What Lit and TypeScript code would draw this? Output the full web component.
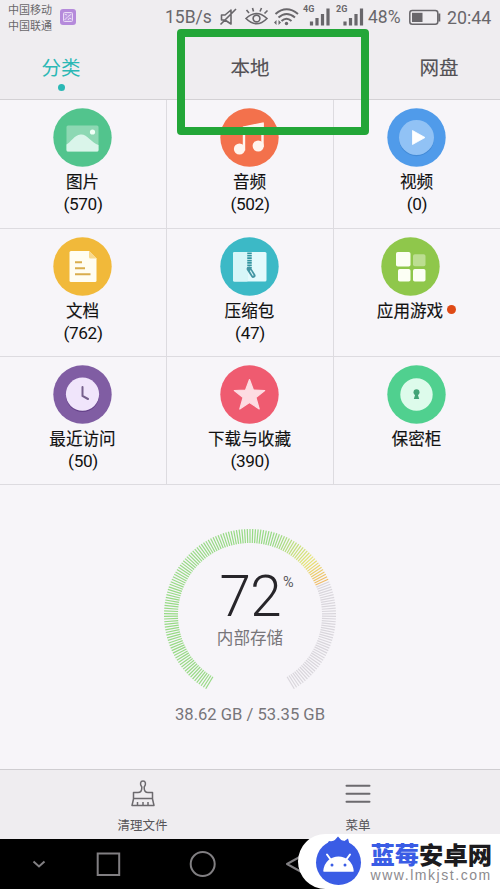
import { LitElement, html, svg, css } from "lit";
import { customElement, property } from "lit/decorators.js";

type Cell = { icon: string; label: string; count?: string; dot?: boolean };

const CELLS: Cell[] = [
  { icon: "image", label: "图片", count: "(570)" },
  { icon: "music", label: "音频", count: "(502)" },
  { icon: "video", label: "视频", count: "(0)" },
  { icon: "doc", label: "文档", count: "(762)" },
  { icon: "zip", label: "压缩包", count: "(47)" },
  { icon: "apps", label: "应用游戏", dot: true },
  { icon: "recent", label: "最近访问", count: "(50)" },
  { icon: "star", label: "下载与收藏", count: "(390)" },
  { icon: "safe", label: "保密柜" },
];

const COLORS: Record<string, string> = {
  image: "#52c48d", music: "#f3714c", video: "#509bea",
  doc: "#f1b93a", zip: "#3cb9c6", apps: "#8fc74b",
  recent: "#805da3", star: "#ef5b70", safe: "#50d08f",
};

const GLYPHS: Record<string, unknown> = {
  image: svg`<rect x="13" y="17" width="32" height="26" rx="1.500" fill="#8dd8b3"/>
    <path d="M13 36C17 34 21 26.500 27 26C33 25 38 34 45 36.500V41.500Q45 43 43.500 43H14.500Q13 43 13 41.500Z" fill="#daf5ea"/>
    <circle cx="39" cy="23.500" r="2.600" fill="#effff6"/>`,
  music: svg`<path d="M23.500 42V19.500L42 16V38.500" fill="none" stroke="#fff4ee" stroke-width="2.400"/>
    <path d="M22.300 18L43.200 13.800V19L22.300 22.500Z" fill="#fff4ee"/>
    <circle cx="19" cy="40.500" r="5.600" fill="#fff4ee"/><circle cx="37.700" cy="37.500" r="5.600" fill="#fff4ee"/>`,
  video: svg`<circle cx="29" cy="30.200" r="17.500" fill="#438bd7"/><circle cx="29" cy="29" r="17.500" fill="#91c2f5"/>
    <path d="M25 22L37.500 29L25 36Z" fill="#fff" stroke="#fff" stroke-width=".8" stroke-linejoin="round"/>`,
  doc: svg`<path d="M17.500 13.500H35.500L43 21V43Q43 44.500 41.500 44.500H17.500Q16 44.500 16 43V15Q16 13.500 17.500 13.500Z" fill="#fffdf2"/>
    <path d="M35.500 13.500V19.500Q35.500 21 37 21H43Z" fill="#f9d98b"/>
    <path d="M21.500 24.700h7M21.500 30.700h10M21.500 36.700h15.500" stroke="#d9ad4d" stroke-width="2"/>`,
  zip: svg`<rect x="12.500" y="14.500" width="33.500" height="29.500" rx="1.500" fill="#e3fafc"/>
    <rect x="12.500" y="14.500" width="15" height="29.500" rx="1.500" fill="#d7f6f8"/>
    <path d="M29 15V32" stroke="#31949f" stroke-width="4.500" stroke-dasharray="1.700 .7"/>
    <path d="M28.500 31.500L32.700 38" stroke="#4296a3" stroke-width="4.600" stroke-linecap="round"/>
    <path d="M30 33.500L32.500 37.700" stroke="#d7f6f8" stroke-width="1.200" stroke-linecap="round"/>`,
  apps: svg`<rect x="14.500" y="14.500" width="14.500" height="14.500" rx="1.800" fill="#fcfff4"/>
    <rect x="31.500" y="16.800" width="12.500" height="12" rx="1.800" fill="#bcde91"/>
    <rect x="16.500" y="31.500" width="12.500" height="12.500" rx="1.800" fill="#fcfff4"/>
    <rect x="31.500" y="31.500" width="12.500" height="12.500" rx="1.800" fill="#fcfff4"/>`,
  recent: svg`<circle cx="29" cy="30" r="16.600" fill="#65428a"/><circle cx="29" cy="28.700" r="16.600" fill="#f0e5fb"/>
    <path d="M29 21.500V30.500L34.500 33.500" fill="none" stroke="#75608c" stroke-width="2" stroke-linecap="round"/>`,
  star: svg`<path d="M29 14L32.900 24.500L44.200 25L35.400 32L38.700 43.500L29 37L19.300 43.500L22.600 32L13.800 25L25.100 24.500Z" fill="#fddce2" stroke="#fddce2" stroke-width="1.200" stroke-linejoin="round"/>`,
  safe: svg`<circle cx="29" cy="29" r="16.200" fill="#ddfbeb"/>
    <circle cx="29" cy="26.800" r="3" fill="#43a477"/><path d="M28 28H30L31.700 33.500H26.300Z" fill="#43a477"/>`,
};

@customElement("file-cell")
class FileCell extends LitElement {
  @property({ attribute: false }) cell!: Cell;
  static styles = css`
    :host { display: flex; flex-direction: column; align-items: center; box-sizing: border-box; padding-top: 8px; color: #111; font: 16.600px/23px Roboto, "Noto Sans CJK SC", sans-serif; }
    .row { display: flex; align-items: center; margin-left: -1px; }
    .mid { display: flex; flex-direction: column; align-items: center; }
    .disc { display: block; width: 59px; height: 59px; }
    .label { height: 22px; margin-top: 4px; white-space: nowrap; -webkit-text-stroke: .15px #111; }
    .count { height: 23px; font-size: 17.200px; letter-spacing: -.35px; }
    .dot { width: 9px; height: 9px; border-radius: 50%; background: #df4a16; margin: 61px 0 0 4px; }
  `;
  render() {
    const c = this.cell;
    return html`<div class="row">
      <div class="mid">
        <svg class="disc" viewBox="-.5 -.5 59 59"><circle cx="29" cy="29" r="29.200" fill=${COLORS[c.icon]} />${GLYPHS[c.icon]}</svg>
        <div class="label">${c.label}</div>
      </div>
      ${c.dot ? html`<span class="dot"></span>` : ""}
    </div>
    ${c.count ? html`<div class="count">${c.count}</div>` : ""}`;
  }
}

const START = -149;
const SWEEP = 298;
const TICKS = 165;

function tickColor(f: number) {
  if (f > 0.724) return "#d9d6dc";
  const mix = (a: number[], b: number[], t: number) =>
    `rgb(${a.map((v, i) => Math.round(v + (b[i] - v) * t)).join(",")})`;
  const green = [151, 218, 133];
  const yellow = [230, 228, 116];
  const orange = [240, 184, 100];
  if (f < 0.56) return mix(green, green, 0);
  if (f < 0.66) return mix(green, yellow, (f - 0.56) / 0.1);
  return mix(yellow, orange, (f - 0.66) / 0.064);
}

@customElement("storage-gauge")
class StorageGauge extends LitElement {
  static styles = css`
    :host { display: flex; flex-direction: column; align-items: center; font-family: Roboto, "Noto Sans CJK SC", sans-serif; }
    .dial { display: grid; width: 174px; height: 174px; margin-top: 43px; }
    .ring, .center { grid-area: 1 / 1; }
    .center { display: flex; flex-direction: column; align-items: center; padding-top: 39px; }
    .value { display: flex; align-items: flex-start; height: 58px; padding-left: 13px; color: #27252a; }
    .num { font-size: 56.500px; line-height: 60px; font-weight: 300; letter-spacing: -.6px; }
    .pct { font-size: 14.500px; line-height: 16px; margin: 8px 0 0 2px; color: #5a585d; }
    .name { font-size: 16.600px; line-height: 24px; margin-top: 2px; color: #77757a; }
    .usage { font-size: 16.600px; line-height: 20px; margin-top: 3px; color: #77757a; white-space: nowrap; }
  `;
  render() {
    return html`<div class="dial">
      <svg class="ring" viewBox="-87 -87 174 174" width="174" height="174">
        ${Array.from({ length: TICKS }, (_, i) => {
          const f = i / (TICKS - 1);
          return svg`<path d="M0 -72V-86" stroke=${tickColor(f)} stroke-width="1.200" transform="rotate(${START + SWEEP * f})"/>`;
        })}
      </svg>
      <div class="center">
        <div class="value"><span class="num">72</span><span class="pct">%</span></div>
        <div class="name">内部存储</div>
      </div>
    </div>
    <div class="usage">38.62 GB / 53.35 GB</div>`;
  }
}

@customElement("status-bar")
class StatusBar extends LitElement {
  static styles = css`
    :host { display: flex; height: 35px; color: #69676b; font-family: Roboto, "Noto Sans CJK SC", sans-serif; }
    :host > * { flex-shrink: 0; }
    .carriers { width: 52px; height: 32px; padding: 3px 0 0 8px; font-size: 11px; line-height: 15.600px; white-space: nowrap; }
    .badge { width: 16px; height: 16px; margin-top: 9px; }
    .speed { width: 53px; margin-left: 89px; }
    .text { font-size: 17.500px; line-height: 35px; white-space: nowrap; }
    .icons { width: 149px; height: 35px; }
    .pct { width: 38px; margin-left: 1px; }
    .battery { width: 32px; height: 35px; margin-left: 3px; }
    .clock { margin-left: 6px; font-size: 17.800px; }
  `;
  render() {
    return html`
      <div class="carriers"><div>中国移动</div><div>中国联通</div></div>
      <svg class="badge" viewBox="0 0 16 16"><rect width="16" height="16" rx="3" fill="#b58adb"/>
        <rect x="3.500" y="3.500" width="9" height="9" rx="1" fill="#bd9ae0" stroke="#eadbf6"/>
        <path d="M4.500 5L7 6M4.500 11L8 7.500L11.500 5M8 11L9.500 9L11.500 10" fill="none" stroke="#eadbf6" stroke-width="1"/></svg>
      <div class="speed text">15B/s</div>
      <svg class="icons" viewBox="218 0 149 35" fill="none" stroke="#69676b" stroke-width="1.600">
        <path d="M221.500 15V20H225L231 24V10L225 15ZM220.500 24.500L236 9" stroke-linejoin="round"/>
        <path d="M246 18.500Q256.500 8.500 267 18.500Q256.500 29 246 18.500Z"/>
        <circle cx="256.500" cy="18.500" r="3.400"/><path d="M249 13L246.500 10M253.500 11.500L252.500 8M260 11.500L261.500 8M264.500 13.500L267.500 10.500"/>
        <path d="M275.500 14Q286.500 4.500 298 14M278.500 17.500Q286.500 10.500 295 17.500M281.500 21Q286.500 16.500 291.500 21" stroke-width="2"/>
        <circle cx="286.500" cy="23.500" r="1.700" fill="#69676b" stroke="none"/>
        <path d="M276.500 20L274 22.500L276.500 25ZM278.500 20L281 22.500L278.500 25Z" fill="#69676b" stroke="none"/>
        <path d="M311.500 25.500V21.500M317 25.500V18M322.500 25.500V14M328 25.500V8.500M345 25.500V21.500M350.500 25.500V18M356 25.500V14M361.500 25.500V8.500" stroke-width="3.200"/>
        <text x="303" y="12" fill="#69676b" stroke="none" font-size="9" font-weight="700" font-family="Roboto, sans-serif">4G</text>
        <text x="336" y="12" fill="#69676b" stroke="none" font-size="9" font-weight="700" font-family="Roboto, sans-serif">2G</text>
      </svg>
      <div class="pct text">48%</div>
      <svg class="battery" viewBox="0 0 32 35"><rect x=".8" y="10.500" width="28" height="13.800" rx="2.500" fill="none" stroke="#69676b" stroke-width="1.500"/>
        <rect x="3" y="12.800" width="10.500" height="9.200" fill="#69676b"/><path d="M30.300 13.500V21.500" stroke="#69676b" stroke-width="2"/></svg>
      <div class="clock text">20:44</div>`;
  }
}

@customElement("app-root")
class AppRoot extends LitElement {
  static styles = css`
    :host { display: flex; flex-direction: column; position: relative; width: 500px; height: 889px; overflow: hidden; background: #f7f5f9; font-family: Roboto, "Noto Sans CJK SC", sans-serif; }
    .header { height: 100px; box-sizing: border-box; background: #efedf0; border-bottom: 1px solid #d3d1d4; }
    .tabs { display: grid; grid-template-columns: 122px 256px 122px; height: 64px; text-align: center; font-size: 19.500px; line-height: 68px; color: #535155; -webkit-text-stroke: .15px currentColor; }
    .tab { display: flex; flex-direction: column; align-items: center; }
    .tab.active { color: #2bb8b5; -webkit-text-stroke: 0; }
    .name { height: 49px; }
    .pip { width: 7px; height: 7px; border-radius: 50%; background: #2bb8b5; }
    .grid { display: grid; grid-template-columns: 167px 167px 166px; grid-template-rows: 128.500px 128px 128.500px; height: 385px; }
    .cell { border-right: 1px solid #dddbe0; border-bottom: 1px solid #dddbe0; }
    .cell:nth-child(3n) { border-right: 0; }
    .gauge { height: 284px; box-sizing: border-box; }
    .actions { display: grid; grid-template-columns: 68px 149px 282px 1fr; height: 70px; box-sizing: border-box; background: #efedf0; border-top: 1px solid #cfcdd1; }
    .action { display: flex; flex-direction: column; align-items: center; font-size: 12.500px; line-height: 18px; color: #565458; }
    .action svg { width: 30px; height: 32px; margin: 8px 0 7px; }
    .nav { height: 50px; background: #000; }
    .nav svg { display: block; }
    .mark { position: absolute; left: 177px; top: 29px; width: 192px; height: 106px; box-sizing: border-box; border: 8px solid #23a638; border-radius: 4px; }
    .brand { position: absolute; left: 298px; top: 834px; width: 230px; height: 55px; box-sizing: border-box; display: flex; padding-left: 16px; border-radius: 28px 0 0 28px; background: #fff; }
    .logo { width: 48px; height: 55px; }
    .words { margin: 7px 0 0 8.500px; white-space: nowrap; }
    .title { font: 900 24.300px/25px "Noto Sans CJK SC", sans-serif; height: 26px; color: #1c1b1e; }
    .blue { color: #3a5ce5; }
    .site { font: 14px/16px "Liberation Sans", sans-serif; letter-spacing: 1.550px; color: #8c8a8e; }
  `;
  render() {
    return html`
      <div class="header">
        <status-bar></status-bar>
        <div class="tabs">
          <div class="tab active"><span class="name">分类</span><span class="pip"></span></div>
          <div class="tab">本地</div>
          <div class="tab">网盘</div>
        </div>
      </div>
      <div class="grid">${CELLS.map((c) => html`<file-cell class="cell" .cell=${c}></file-cell>`)}</div>
      <storage-gauge class="gauge"></storage-gauge>
      <div class="actions">
        <span></span>
        <div class="action">
          <svg viewBox="0 0 30 32" fill="none" stroke="#6c6a6e" stroke-width="1.500" stroke-linejoin="round">
            <path d="M13.800 9C11.500 6 12.500 3 15 3S18.500 6 16.200 9V10C16.200 13 18 14.500 20 14.500H24.500V21L26 27.500H4L5.500 21V14.500H10C12 14.500 13.800 13 13.800 10ZM5.500 20.500H24.500M9.500 27V24M15 27V24M20 27V24"/>
          </svg>清理文件
        </div>
        <div class="action">
          <svg viewBox="0 0 30 32"><path d="M3.500 7.700H26.500M3.500 15.700H26.500M3.500 23.700H26.500" stroke="#6c6a6e" stroke-width="2" stroke-linecap="round"/></svg>菜单
        </div>
      </div>
      <div class="nav">
        <svg width="500" height="50" fill="none" stroke="#817f82" stroke-width="2">
          <path d="M33.500 22.500L39 27.500L44.500 22.500"/><rect x="97.700" y="14.500" width="21.500" height="21.500"/>
          <circle cx="202.700" cy="25" r="12"/><path d="M306 14.500L287 25L306 35.500Z" stroke-linejoin="round"/>
        </svg>
      </div>
      <div class="mark"></div>
      <div class="brand">
        <svg class="logo" viewBox="314 834 48 55">
          <path d="M325 847L329 841L333 842L338 836.500L343 842L348 838.500L350 846Z" fill="#3a5ce5"/>
          <circle cx="338.500" cy="862.500" r="22.500" fill="#3a5ce5"/>
          <path d="M324 871C326 852.500 351 852.500 353 871Z" fill="#fff" stroke="#fff" stroke-width="1.500" stroke-linejoin="round"/>
          <path d="M331 860L327 854.500M346 860L350 854.500" stroke="#fff" stroke-width="2" stroke-linecap="round"/>
          <circle cx="332" cy="865" r="1.500" fill="#3a5ce5"/><circle cx="345" cy="865" r="1.500" fill="#3a5ce5"/>
        </svg>
        <div class="words"><div class="title"><span class="blue">蓝莓</span>安卓网</div><div class="site">www.lmkjst.com</div></div>
      </div>`;
  }
}
